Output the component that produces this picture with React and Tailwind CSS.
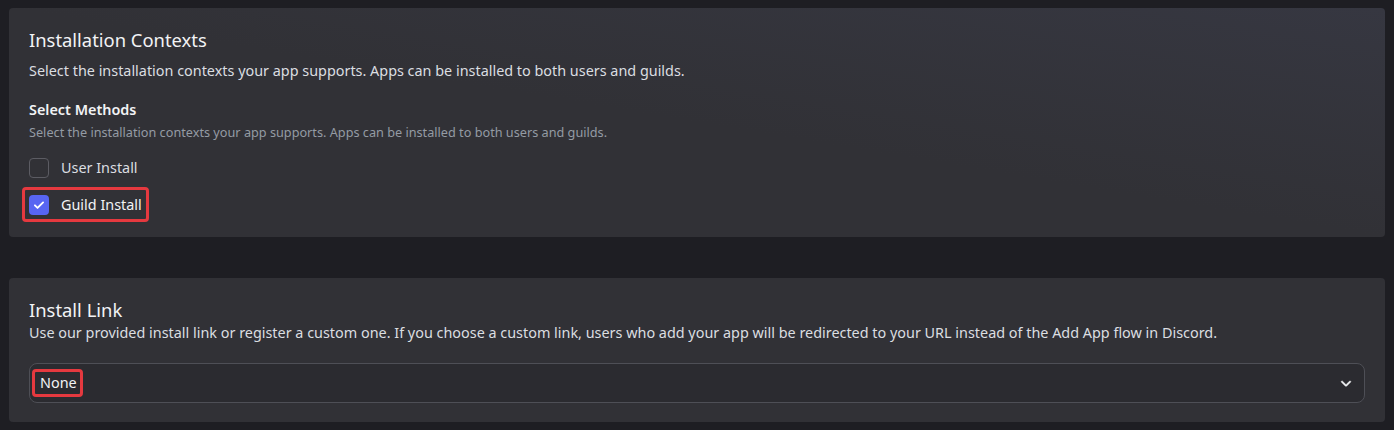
import React from "react";

function Chevron() {
  return (
    <svg width="16" height="16" viewBox="0 0 24 24" fill="none">
      <path d="M5.3 9.3a1 1 0 0 1 1.4 0L12 14.58l5.3-5.3a1 1 0 1 1 1.4 1.42l-6 6a1 1 0 0 1-1.4 0l-6-6a1 1 0 0 1 0-1.42Z" fill="#f2f3f5" stroke="#f2f3f5" strokeWidth="1" />
    </svg>
  );
}

export default function App() {
  return (
    <div
      className="w-[1394px] h-[430px] bg-[#1e1e23] flex flex-col px-[9px] pt-[8px] gap-[41px] overflow-hidden"
      style={{ fontFamily: '"Noto Sans", "Open Sans", sans-serif' }}
    >
      <section className="h-[229px] rounded-[4px] bg-[#313136] bg-gradient-to-bl from-[#363741] via-[#313136] to-[#313136] px-[20px] pt-[20px] flex flex-col">
        <h2 className="text-[18.4px] leading-[24px] text-[#f2f3f5] font-normal">Installation Contexts</h2>
        <p className="mt-[10px] text-[14.4px] leading-[18px] text-[#dbdee1]">
          Select the installation contexts your app supports. Apps can be installed to both users and guilds.
        </p>
        <h3 className="mt-[21px] text-[14.4px] leading-[18px] font-semibold text-[#f2f3f5]">Select Methods</h3>
        <p className="mt-[5px] text-[12.7px] leading-[16px] text-[#949ba4]">
          Select the installation contexts your app supports. Apps can be installed to both users and guilds.
        </p>
        <div className="mt-[18px] flex flex-col gap-[9px]">
          <label className="flex items-center gap-[12px] h-[20px]">
            <span className="w-[20px] h-[20px] rounded-[4px] border border-[#5c5c63] box-border" />
            <span className="text-[14.4px] text-[#dbdee1]">User Install</span>
          </label>
          <div className="-ml-[7px] w-[127px] h-[35px] rounded-[4px] border-[3px] border-[#e5393f] flex items-center pl-[4px] gap-[12px]">
            <span className="w-[20px] h-[20px] rounded-[4px] bg-[#5865f2] flex items-center justify-center">
              <svg width="14" height="14" viewBox="0 0 24 24" fill="none">
                <path d="M5 12.5l4.5 4.5L19 7.5" stroke="#ffffff" strokeWidth="3.2" strokeLinecap="round" strokeLinejoin="round" />
              </svg>
            </span>
            <span className="text-[14.4px] text-[#f2f3f5]">Guild Install</span>
          </div>
        </div>
      </section>

      <section className="h-[144px] rounded-[4px] bg-[#313136] px-[20px] pt-[20px] flex flex-col">
        <h2 className="text-[18.4px] leading-[24px] text-[#f2f3f5] font-normal">Install Link</h2>
        <p className="mt-[2px] text-[14.4px] leading-[18px] text-[#dbdee1]">
          Use our provided install link or register a custom one. If you choose a custom link, users who add your app will be redirected to your URL instead of the Add App flow in Discord.
        </p>
        <div className="mt-[21px] h-[40px] rounded-[8px] border border-[#4e4f56] bg-[#2b2b30] flex items-center pl-[2px] pr-[10px] justify-between">
          <div className="h-[28px] pl-[5px] pr-[3px] rounded-[4px] border-[3px] border-[#e5393f] flex items-center">
            <span className="text-[14.4px] text-[#f2f3f5]">None</span>
          </div>
          <Chevron />
        </div>
      </section>
    </div>
  );
}
